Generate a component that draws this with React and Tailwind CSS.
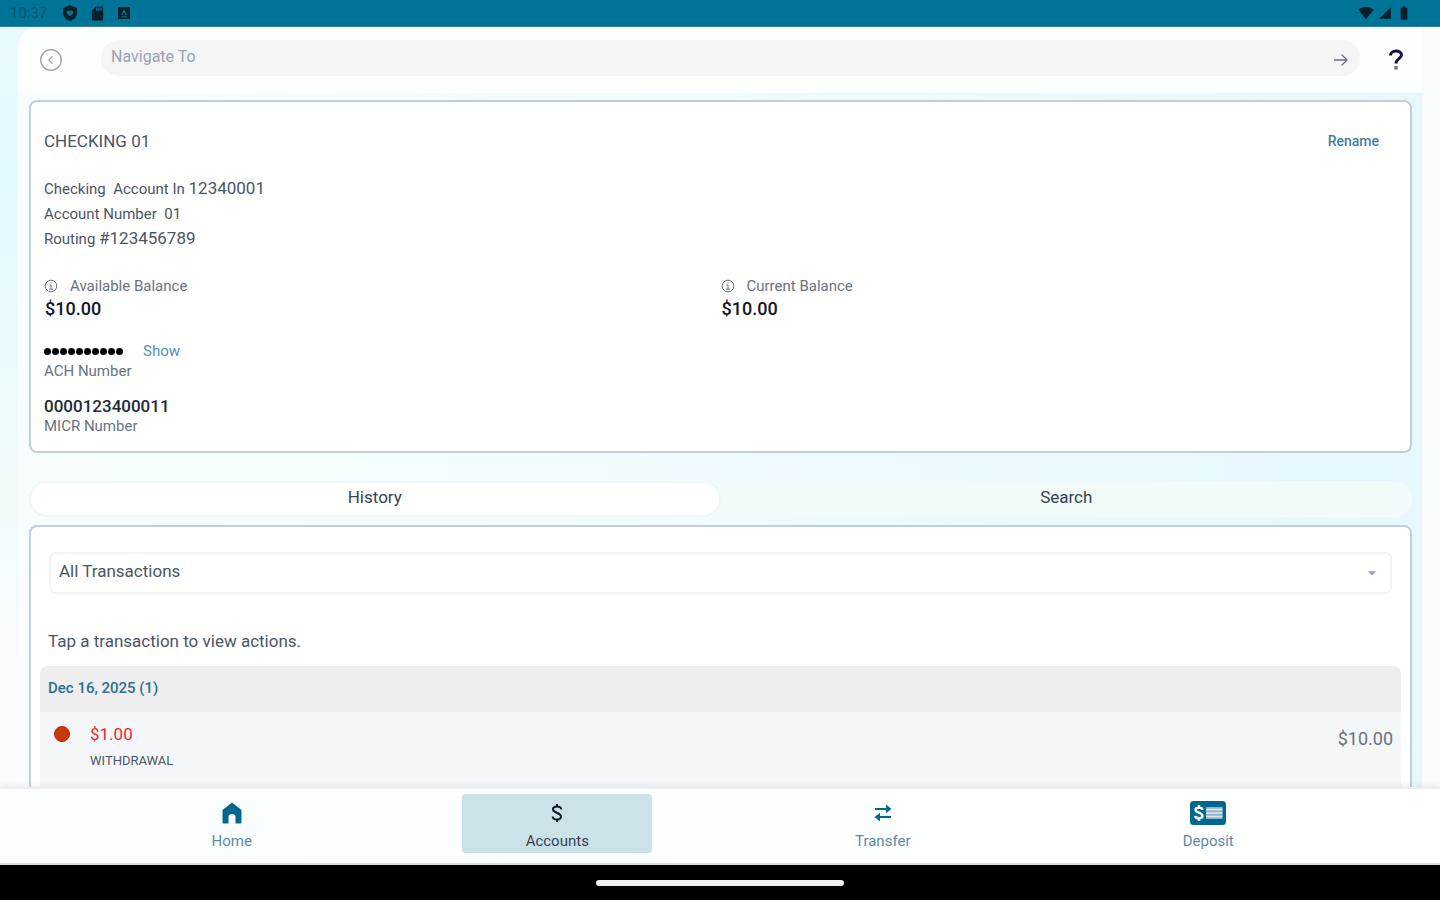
import React, { useState } from "react";
import { MdSignalWifi4Bar, MdSignalCellular4Bar, MdBatteryFull, MdSdCard, MdArrowDropDown } from "react-icons/md";

// Shared text styles for the account card
const labelClasses = "text-[15px] leading-5 text-gray-500";
const detailClasses = "text-[15px] leading-[25px] text-gray-600";
const cardClasses = "bg-white border-2 border-[#c1cedb] rounded-lg";

// --- Icons ---
function ShieldIcon() {
  return (
    <svg width="16" height="16" viewBox="0 0 16 16" aria-hidden="true">
      <path fillRule="evenodd" fill="currentColor" d="M8 0L15 3V8C15 11.500 12 15 8 16C4 15 1 11.500 1 8V3ZM8 11.500L4.800 8C4.200 6 6.500 4.500 8 6C9.500 4.500 11.800 6 11.200 8Z" />
    </svg>
  );
}

function BadgeIcon() {
  return (
    <svg width="12" height="12" viewBox="0 0 12 12" aria-hidden="true">
      <path fillRule="evenodd" fill="currentColor" d="M1 0H11Q12 0 12 1V11Q12 12 11 12H1Q0 12 0 11V1Q0 0 1 0ZM6 2L3 8H4.500L6 5L7.500 8H9ZM3 9.200H9V10.200H3Z" />
    </svg>
  );
}

function BackIcon() {
  return (
    <svg width="24" height="24" viewBox="0 0 24 24" fill="none" stroke="currentColor" strokeWidth="1.300" aria-hidden="true">
      <circle cx="12" cy="12" r="10.300" />
      <path d="M13.500 8.500L9.700 12L13.500 15.500" />
    </svg>
  );
}

function ArrowIcon() {
  return (
    <svg width="14" height="14" viewBox="0 0 14 14" fill="none" stroke="currentColor" strokeWidth="1.400" aria-hidden="true">
      <path d="M0 7H13M7.500 1.500L13 7L7.500 12.500" />
    </svg>
  );
}

function InfoIcon() {
  return (
    <svg width="14" height="14" viewBox="0 0 14 14" fill="none" stroke="currentColor" aria-hidden="true">
      <circle cx="7" cy="7" r="5.800" />
      <path d="M5.500 6H7V10M5 10.200H9M7 3.300V4.500" />
    </svg>
  );
}

function HelpIcon() {
  return (
    <svg width="16" height="22" viewBox="0 0 16 22" fill="none" aria-hidden="true">
      <path d="M2.500 6.500C2.500 0.500 13.500 0.500 13.500 6C13.500 9.800 8 9.500 8 14.500" stroke="#17104f" strokeWidth="3" />
      <rect x="6.300" y="17" width="3.400" height="3.600" fill="#777" />
    </svg>
  );
}

function HomeIcon() {
  return (
    <svg width="22" height="22" viewBox="0 0 22 22" fill="currentColor" aria-hidden="true">
      <path d="M11 0.500L20.500 8V20.500Q20.500 21.500 19.500 21.500H14.500V14.500Q14.500 12 11 12T7.500 14.500V21.500H2.500Q1.500 21.500 1.500 20.500V8Z" />
    </svg>
  );
}

function DollarIcon() {
  return (
    <svg width="14" height="20" viewBox="0 0 14 20" fill="none" stroke="currentColor" strokeWidth="2" aria-hidden="true">
      <path d="M11.300 6.500C11 2.500 3 2.500 3 6.500C3 10 11 9.500 11 13.500C11 17.500 3 17.500 2.700 13.500M7 1V4M7 16V19" />
    </svg>
  );
}

function TransferIcon() {
  return (
    <svg width="18" height="18" viewBox="0 0 18 18" aria-hidden="true">
      <path d="M1 5H13M5 13H17" fill="none" stroke="currentColor" strokeWidth="1.800" />
      <path d="M12 0.500L17.500 5L12 9.200ZM6 8.800L0.500 13L6 17.500Z" fill="currentColor" />
    </svg>
  );
}

function CheckIcon() {
  return (
    <svg width="36" height="24" viewBox="0 0 36 24" fill="none" aria-hidden="true">
      <rect width="36" height="24" rx="3.500" fill="currentColor" />
      <rect x="16" y="6" width="16.500" height="12" fill="#8fb6ce" />
      <path d="M16 8.500H32.500M16 12H32.500M16 15.500H32.500" stroke="#dbe9f0" strokeWidth="1.500" />
      <path d="M12.500 9C12 6 5.500 6 5.500 9C5.500 12 12.500 11.500 12.500 15C12.500 18 6 18 5 15M9 4V7M9 17V20" stroke="white" strokeWidth="2.400" />
    </svg>
  );
}

const navItems = [
  { name: "Home", icon: <HomeIcon /> },
  { name: "Accounts", icon: <DollarIcon /> },
  { name: "Transfer", icon: <TransferIcon /> },
  { name: "Deposit", icon: <CheckIcon /> },
];

function Balance({ name, amount }) {
  return (
    <div>
      <div className={`flex items-center gap-3 ${labelClasses}`}>
        <InfoIcon />
        {name}
      </div>
      <div className="pt-px px-px text-lg leading-6 font-medium text-gray-900">{amount}</div>
    </div>
  );
}

// --- Account summary ---
function AccountCard() {
  const [showAch, setShowAch] = useState(false);

  return (
    <section className={`${cardClasses} px-[13px] pt-[27px] pb-[15px]`}>
      <div className="flex items-center justify-between pr-[18px]">
        <h1 className="text-[17px] leading-6 text-gray-600">CHECKING 01</h1>
        <button className="text-sm leading-6 font-medium text-[#3f7f9f]">Rename</button>
      </div>

      <div className={`mt-6 ${detailClasses}`}>
        <p>Checking&nbsp; Account In <span className="text-[17px] leading-5">12340001</span></p>
        <p>Account Number&nbsp; 01</p>
        <p>Routing <span className="text-[17px] leading-5">#123456789</span></p>
      </div>

      <div className="mt-6 grid grid-cols-2">
        <Balance name="Available Balance" amount="$10.00" />
        <Balance name="Current Balance" amount="$10.00" />
      </div>

      <div className="mt-5">
        <div className="flex items-center gap-5 leading-5">
          {showAch ? (
            <span className="text-[15px] font-medium text-gray-900">0000000001</span>
          ) : (
            <span className="flex gap-px" aria-label="Hidden ACH number">
              {Array.from({ length: 10 }, (_, i) => (
                <span key={i} className="w-[7px] h-[7px] rounded-full bg-black" />
              ))}
            </span>
          )}
          <button className="text-[15px] leading-5 text-[#4c93bb]" onClick={() => setShowAch(!showAch)}>
            {showAch ? "Hide" : "Show"}
          </button>
        </div>
        <p className={labelClasses}>ACH Number</p>
      </div>

      <div className="mt-[15px]">
        <p className="text-[17px] leading-5 font-medium text-gray-800">0000123400011</p>
        <p className={labelClasses}>MICR Number</p>
      </div>
    </section>
  );
}

// --- Transaction history ---
function History() {
  return (
    <section className={`${cardClasses} px-[9px] pt-[25px]`}>
      <div className="relative mx-[9px]">
        <select
          aria-label="Transaction filter"
          className="w-full h-[42px] appearance-none bg-white border-2 border-[#f3f3f3] rounded-md px-2 pb-[2px] text-[17px] text-gray-600"
        >
          <option>All Transactions</option>
        </select>
        <MdArrowDropDown size={20} className="absolute right-[10px] top-[11px] text-gray-400 pointer-events-none" />
      </div>

      <p className="mt-[35px] mb-[13px] px-2 text-[17px] leading-6 text-gray-600">Tap a transaction to view actions.</p>

      <div className="rounded-t-lg bg-[#eeeeee] px-2 pb-px h-[46px] flex items-center text-[15px] font-medium text-[#2c6f92]">
        Dec 16, 2025 (1)
      </div>
      <div className="flex bg-[#f5f6f8] pl-[14px] pr-2 pt-[10px] h-24">
        <span className="w-4 h-4 mt-1 mr-5 rounded-full bg-[#c63a05] border border-[#d01708]" />
        <div className="flex-1">
          <p className="text-[17px] leading-6 text-[#f0282d]">$1.00</p>
          <p className="text-[13px] leading-[30px] text-gray-600">WITHDRAWAL</p>
        </div>
        <p className="text-lg leading-[34px] text-gray-500">$10.00</p>
      </div>
    </section>
  );
}

// --- Main App Component ---
export default function App() {
  const [tab, setTab] = useState("History");
  const [page, setPage] = useState("Accounts");

  return (
    <div className="h-screen flex flex-col bg-black font-['Roboto',sans-serif]">
      {/* --- Status bar --- */}
      <div className="h-[27px] shrink-0 flex items-center justify-between pl-[10px] pr-7 bg-[#007399] border-b border-[#35809c] text-[#06212c]">
        <div className="flex items-center">
          <span className="w-[52px] text-[15px] text-[#0b526c]">10:37</span>
          <ShieldIcon />
          <MdSdCard size={17} className="ml-[11px] mr-3" />
          <BadgeIcon />
        </div>
        <div className="flex items-center gap-1">
          <MdSignalWifi4Bar size={16} />
          <MdSignalCellular4Bar size={14} />
          <MdBatteryFull size={16} />
        </div>
      </div>

      <div className="flex-1 min-h-0 flex flex-col px-[18px] bg-[radial-gradient(ellipse_at_0%_20%,#e3fafc,#fafcfc_60%)]">
        <div className="flex-1 min-h-0 flex flex-col">
          {/* --- Top bar --- */}
          <header className="h-[66px] shrink-0 flex items-center rounded-tl-[20px] bg-[#fdfefe] pl-[21px] pr-[18px]">
            <button aria-label="Back" className="text-gray-400"><BackIcon /></button>
            <label className="flex-1 flex items-center h-9 ml-[38px] mr-7 pl-[10px] pr-3 mb-1 rounded-full bg-[#f5f5f5]">
              <input
                aria-label="Navigate To"
                placeholder="Navigate To"
                className="flex-1 pb-[2px] bg-transparent text-base placeholder-gray-400 outline-none"
              />
              <span className="pt-1 text-gray-500"><ArrowIcon /></span>
            </label>
            <button aria-label="Help"><HelpIcon /></button>
          </header>

          <main className="flex-1 min-h-0 overflow-y-auto [scrollbar-width:none] pl-[11px] pr-[10px] pt-[7px] bg-linear-to-r from-[#f8feff] to-[#e6f8fd]">
            <AccountCard />

            <div className="mt-7 mb-2 grid grid-cols-2 rounded-full bg-[#f1fbfa]">
              {["History", "Search"].map((name) => (
                <button
                  key={name}
                  onClick={() => setTab(name)}
                  className={`h-9 pb-[2px] rounded-full border-2 text-[17px] text-gray-700 ${tab === name ? "bg-white border-[#f1f6f6]" : "border-transparent"}`}
                >
                  {name}
                </button>
              ))}
            </div>

            <History />
          </main>
        </div>
      </div>

      {/* --- Bottom navigation --- */}
      <nav className="h-[78px] shrink-0 border-t-2 border-[#eceef1] border-b-2 border-b-[#dddddd] bg-linear-to-r from-[#fbfefe] to-white px-[69px] pt-[5px] grid grid-cols-4 relative shadow-[0_-2px_6px_rgba(0,0,0,0.06)]">
        {navItems.map((item) => (
          <button
            key={item.name}
            onClick={() => setPage(item.name)}
            className={`w-[190px] h-[59px] mx-auto rounded flex flex-col items-center text-[15px] leading-[18px] ${page === item.name ? "bg-[#cbe3e8] text-gray-700" : "text-[#5b8ca6]"}`}
          >
            <span className={`h-[38px] flex items-center ${page === item.name ? "text-gray-900" : "text-[#00688f]"}`}>{item.icon}</span>
            {item.name}
          </button>
        ))}
      </nav>

      <div className="h-[35px] shrink-0 flex items-center justify-center bg-black">
        <div className="w-[248px] h-[6px] rounded-full bg-[#eeeeee]" />
      </div>
    </div>
  );
}
